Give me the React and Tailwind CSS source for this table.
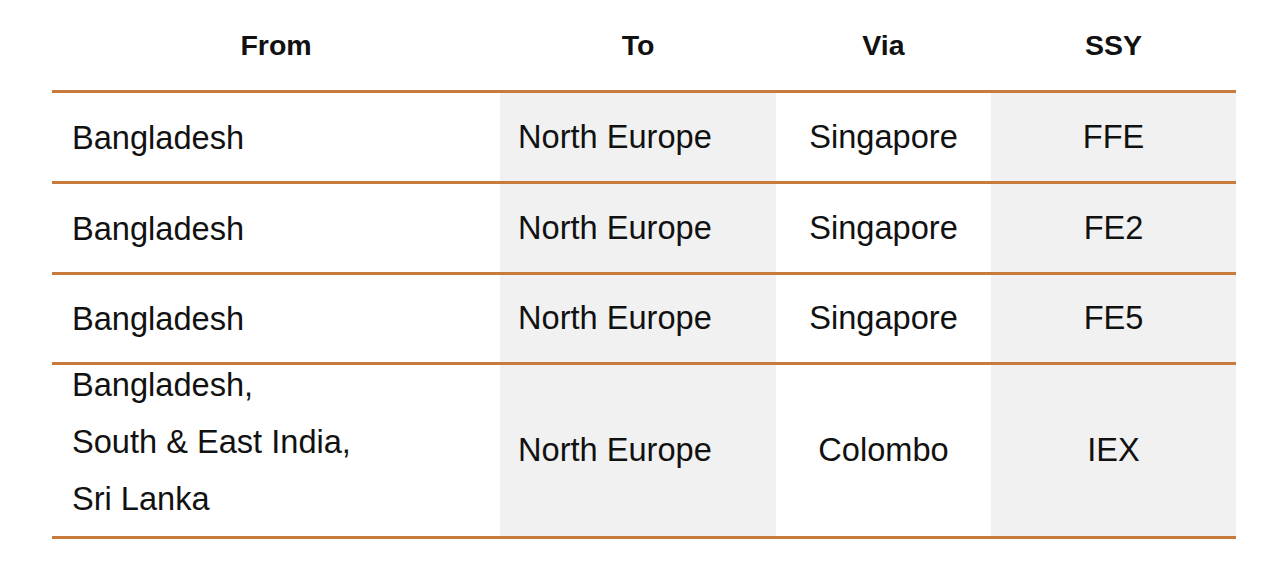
import React from "react";

const rows = [
  { from: ["Bangladesh"], to: "North Europe", via: "Singapore", ssy: "FFE", h: "h-[88px]" },
  { from: ["Bangladesh"], to: "North Europe", via: "Singapore", ssy: "FE2", h: "h-[88px]" },
  { from: ["Bangladesh"], to: "North Europe", via: "Singapore", ssy: "FE5", h: "h-[87px]" },
  {
    from: ["Bangladesh,", "South & East India,", "Sri Lanka"],
    to: "North Europe",
    via: "Colombo",
    ssy: "IEX",
    h: "h-[171px]",
    multi: true,
  },
];

export default function App() {
  return (
    <div
      className="w-[1280px] h-[569px] bg-white text-[#111]"
      style={{ fontFamily: '"Liberation Sans", Arial, sans-serif' }}
    >
      <div className="ml-[52px] w-[1184px]">
        {/* Header */}
        <div className="grid grid-cols-[448px_276px_215px_245px] h-[90px] items-center text-[28.5px] font-bold text-center">
          <div>From</div>
          <div>To</div>
          <div>Via</div>
          <div>SSY</div>
        </div>

        {/* Body */}
        {rows.map((r, i) => (
          <div
            key={i}
            className={`grid grid-cols-[448px_276px_215px_245px] border-t-[3px] border-[#c97b3c] text-[32.6px] ${
              i === rows.length - 1 ? "border-b-[3px]" : ""
            }`}
          >
            <div
              className={`${r.h} flex flex-col justify-center pl-5 leading-[57px] ${
                r.multi ? "pb-[18px]" : ""
              }`}
            >
              {r.from.map((t) => (
                <span key={t} className="whitespace-nowrap">{t}</span>
              ))}
            </div>
            <div className={`${r.h} flex items-center pl-[18px] bg-[#f1f1f1]`}>{r.to}</div>
            <div className={`${r.h} flex items-center justify-center`}>{r.via}</div>
            <div className={`${r.h} flex items-center justify-center bg-[#f1f1f1]`}>{r.ssy}</div>
          </div>
        ))}
      </div>
    </div>
  );
}
